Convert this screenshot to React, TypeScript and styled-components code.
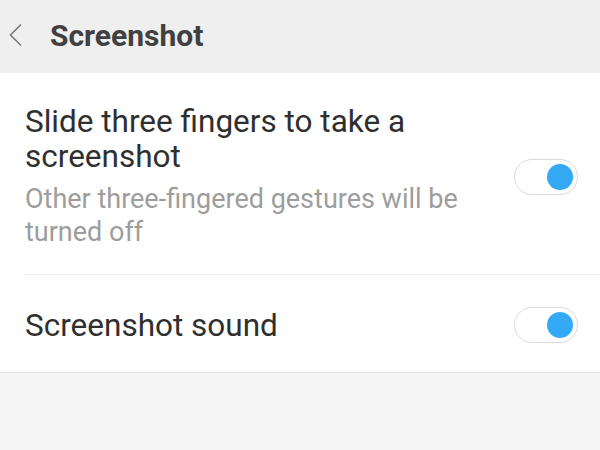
import React from "react";
import styled, { createGlobalStyle } from "styled-components";

const Global = createGlobalStyle`
  html, body { margin: 0; padding: 0; }
  body {
    width: 600px;
    height: 450px;
    overflow: hidden;
    background: #f5f5f5;
    font-family: Roboto, "Noto Sans", sans-serif;
  }
`;

const Page = styled.div`
  display: flex;
  flex-direction: column;
  width: 600px;
  height: 450px;
  background: #f5f5f5;
`;

const Header = styled.header`
  display: flex;
  align-items: center;
  height: 73px;
  background: #efefef;
  box-sizing: border-box;
  padding: 0 0 3px 8px;
`;

const BackButton = styled.div`
  display: flex;
  align-items: center;
  width: 42px;
  height: 24px;
`;

const Title = styled.h1`
  margin: 0;
  font-size: 30px;
  font-weight: 700;
  color: #404040;
`;

const List = styled.section`
  background: #ffffff;
  border-bottom: 1px solid #e2e2e2;
`;

const Row = styled.div<{ $pt: number; $pb: number; $divider?: boolean }>`
  display: flex;
  align-items: center;
  margin-left: 25px;
  padding: ${(p) => p.$pt}px 22px ${(p) => p.$pb}px 0;
  border-bottom: ${(p) => (p.$divider ? "1px solid #ececec" : "none")};
`;

const TextCol = styled.div`
  flex: 1;
  display: flex;
  flex-direction: column;
  gap: 9px;
  padding-right: 24px;
`;

const ItemTitle = styled.div`
  font-size: 31.5px;
  line-height: 35px;
  color: #2f2f2f;
`;

const ItemSub = styled.div`
  font-size: 27px;
  line-height: 33px;
  color: #9d9d9d;
`;

const Switch = styled.div<{ $on: boolean }>`
  flex: none;
  width: 64px;
  height: 36px;
  box-sizing: border-box;
  border: 1px solid #dadada;
  border-radius: 18px;
  background: #fff;
  display: flex;
  align-items: center;
  justify-content: ${(p) => (p.$on ? "flex-end" : "flex-start")};
  padding: 0 4px;
`;

const Knob = styled.div`
  width: 26px;
  height: 26px;
  border-radius: 50%;
  background: #34a9f5;
`;

const Chevron = () => (
  <svg width="16" height="24" viewBox="0 0 16 24" fill="none">
    <path d="M13 1.5 L2.5 12 L13 22.5" stroke="#7a7a7a" strokeWidth="1.6" />
  </svg>
);

export default function App() {
  return (
    <Page>
      <Global />
      <Header>
        <BackButton>
          <Chevron />
        </BackButton>
        <Title>Screenshot</Title>
      </Header>
      <List>
        <Row $pt={31} $pb={25} $divider>
          <TextCol>
            <ItemTitle>Slide three fingers to take a screenshot</ItemTitle>
            <ItemSub>Other three-fingered gestures will be turned off</ItemSub>
          </TextCol>
          <Switch $on>
            <Knob />
          </Switch>
        </Row>
        <Row $pt={32} $pb={29}>
          <TextCol>
            <ItemTitle>Screenshot sound</ItemTitle>
          </TextCol>
          <Switch $on>
            <Knob />
          </Switch>
        </Row>
      </List>
    </Page>
  );
}
